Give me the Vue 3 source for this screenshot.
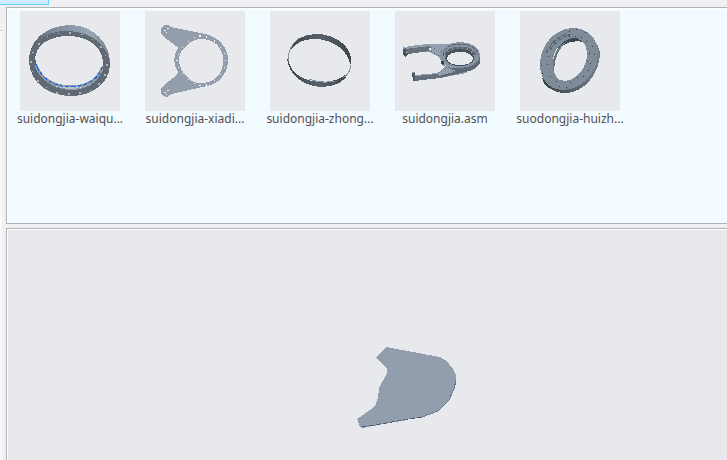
<template>
  <div class="window">
    <!-- Strip above the panels -->
    <div class="tab-strip">
      <button class="tab" aria-label="Current tab"></button>
    </div>

    <div class="body">
      <div class="gutter"></div>

      <main class="panels">
        <!-- Part thumbnails -->
        <section class="panel browser">
          <button v-for="part in parts" :key="part.id" class="part">
            <svg class="thumb" viewBox="0 0 100 100" shape-rendering="crispEdges" aria-hidden="true">
              <defs>
                <linearGradient id="rim" x1="0" x2="1">
                  <stop offset="0" stop-color="#505963" />
                  <stop offset="0.3" stop-color="#7f8b99" />
                  <stop offset="0.75" stop-color="#98a5b4" />
                  <stop offset="1" stop-color="#7b8794" />
                </linearGradient>
                <linearGradient id="band" x1="0" x2="1">
                  <stop offset="0" stop-color="#3d454c" />
                  <stop offset="0.5" stop-color="#59626a" />
                  <stop offset="1" stop-color="#3d454c" />
                </linearGradient>
                <linearGradient id="side" x1="0" x2="1">
                  <stop offset="0" stop-color="#353d44" />
                  <stop offset="1" stop-color="#737e8a" />
                </linearGradient>
              </defs>

              <!-- Outer ring -->
              <g v-if="part.shape === 'outer-ring'">
                <path fill="url(#rim)" fill-rule="evenodd" d="M9 51C8 29 27 14 51 14C74 15 90 32 90 52C89 72 73 85 51 85C29 85 11 73 9 51ZM15 49C16 65 30 78 51 78C70 77 83 67 83 50C81 34 67 24 48 24C28 24 15 34 15 49Z" />
                <path fill="#616a74" fill-rule="evenodd" d="M9 49C10 31 26 20 47 20C71 20 89 35 90 54C89 73 72 85 50 85C27 84 9 69 9 49ZM15 48C16 65 29 79 51 79C71 79 83 67 83 51C82 35 67 25 48 25C29 25 16 34 15 48Z" />
                <path fill="none" stroke="#8e9aa8" stroke-width="3" d="M16 54C21 68 34 76 51 76C66 76 78 69 82 57" />
                <path fill="none" stroke="#bac3cc" stroke-width="2" d="M42 76Q50 78 59 76" />
                <path fill="none" stroke="#1263e8" stroke-width="1" d="M15 49L17 56" />
                <path fill="none" stroke="#1263e8" stroke-width="1" stroke-dasharray="4 2" d="M17 56C22 67 34 76 51 76C67 75 79 68 82 56" />
                <path fill="#aeb9c6" d="M18 32h2v2h-2zM27 25h1v1h-1zM38 22h1v1h-1zM49 21h2v2h-2zM61 23h2v1h-2zM72 28h1v1h-1zM80 35h2v2h-2zM85 44h1v1h-1zM86 53h2v2h-2zM84 63h2v2h-2zM78 72h2v2h-2zM70 79h1v1h-1zM59 81h2v2h-2zM48 82h2v2h-2zM36 81h2v2h-2zM26 76h1v1h-1zM17 69h2v2h-2zM12 60h1v1h-1zM10 50h2v2h-2zM12 41h2v1h-2z" />
              </g>

              <!-- Flat plate with two arms -->
              <g v-else-if="part.shape === 'plate'">
                <path fill="#929eac" d="M19 14L23 14L26 16L55 22C72 24 83 35 83 49C83 65 71 75 57 76L27 83L22 86L18 85L16 82V77L20 73L32 64L33 61C28 54 28 44 33 37L31 35L19 26L16 22V17Z" />
                <path fill="#e8e9ed" d="M34 49C34 58 39 63 44 68C48 71 51 72 56 72C70 72 78 63 78 49C78 36 69 28 56 28C49 28 45 31 41 35C36 40 34 43 34 49Z" />
                <path fill="#f4f5f6" d="M22 17h2v1h-2zM19 19h2v1h-2zM21 21h1v1h-1zM22 79h2v1h-2zM19 81h2v1h-2zM21 83h1v1h-1zM43 30h1v1h-1zM49 26h1v1h-1zM54 24h2v2h-2zM61 25h1v2h-1zM69 29h1v2h-1zM75 36h1v1h-1zM79 42h1v1h-1zM80 49h1v1h-1zM79 56h1v1h-1zM75 63h1v1h-1zM69 69h1v1h-1zM61 73h1v2h-1zM54 74h2v1h-2zM49 72h1v1h-1zM43 68h1v1h-1zM37 62h1v1h-1zM33 56h1v1h-1zM31 49h2v1h-2zM33 43h1v1h-1zM37 36h1v1h-1z" />
              </g>

              <!-- Thin middle ring -->
              <g v-else-if="part.shape === 'thin-ring'">
                <path fill="url(#band)" d="M19 41C23 28 34 23 46 23C64 23 78 33 81 46V53H80C77 38 62 28 44 28C33 28 25 32 19 41Z" />
                <path fill="url(#band)" d="M17 48H18C20 62 34 71 52 71C64 71 74 67 80 59C76 71 65 76 51 76C33 75 19 64 17 48Z" />
                <path fill="none" stroke="#8694a1" stroke-width="1" d="M29 27C21 33 18 40 18 50M81 48C82 58 78 64 73 67M39 68Q51 73 65 70" />
              </g>

              <!-- Whole assembly -->
              <g v-else-if="part.shape === 'assembly'">
                <path fill="#939fae" d="M10 37L14 35L33 33L58 33L61 43L49 56L44 46L34 41L14 42Z" />
                <path fill="#66717c" d="M10 38L35 35V40L13 43Z" />
                <path fill="#4a535c" d="M8 37H11V42H13V44L10 46L8 43Z" />
                <path fill="#939fae" d="M20 64L43 62L51 54L74 56L72 62L45 67L19 69Z" />
                <path fill="#65707b" d="M20 65L43 63L45 67L20 70Z" />
                <path fill="#4b555f" d="M17 61H20V70H18V66H17Z" />
                <path fill="#8c98a5" d="M8 36h2v2h-2zM17 61h3v1h-3z" />
                <path fill="#5e6974" d="M46 46V53L50 55Q67 62 83 49L85 44V52C82 58 76 60 70 61L45 67L44 65L62 60Q52 58 46 51Z" />
                <path fill="#8793a1" d="M45 45C46 36 55 31 65 31C77 31 85 37 85 44C85 52 76 57 65 57C54 57 46 52 45 45Z" />
                <path fill="none" stroke="#56616c" stroke-width="1" stroke-dasharray="4 1" d="M48 45C48 37 56 33 66 33C75 33 82 38 83 44" />
                <path fill="none" stroke="#5b6671" stroke-width="3" stroke-dasharray="4 1" d="M51 44C53 38 59 37 66 37C73 37 79 40 80 45" />
                <path fill="#47525c" d="M50 47C51 41 57 38 65 38C74 38 79 42 79 47C79 52 73 55 65 55C57 55 51 52 50 47Z" />
                <path fill="#e8e9ed" d="M52 48C52 43 58 41 66 41C73 41 78 44 78 48C77 52 72 54 65 54C58 54 53 52 52 48Z" />
                <path fill="none" stroke="#515c67" stroke-width="1" stroke-dasharray="1 3" d="M35 36L48 41M36 40L46 46M43 62L53 56M47 65L63 59" />
                <path fill="#e8e9ed" d="M34 37h2v2h-2z" />
                <path fill="#35404a" d="M46 50h3v3h-3z" />
              </g>

              <!-- Slewing ring seen at an angle -->
              <g v-else>
                <path fill="url(#side)" d="M22 66C23 75 31 80 42 82C62 84 80 64 80 42L77 32C80 58 64 77 42 78C33 78 26 73 22 66Z" />
                <path fill="#7f8b98" fill-rule="evenodd" d="M20 53C20 33 36 17 53 17C68 17 78 28 78 42C78 62 62 79 42 79C28 78 20 68 20 53ZM33 50C32 61 36 70 45 70C57 69 68 55 67 42C67 35 63 29 56 28C44 27 33 38 33 50Z" />
                <path fill="#3e474f" d="M35 42C40 31 49 26 57 27L63 31C50 28 40 35 35 42Z" />
                <path fill="#687480" d="M33 60C31 44 38 34 47 30C39 38 34 46 34 60Z" />
                <path fill="none" stroke="#536069" stroke-width="1" stroke-dasharray="5 1" d="M26 42C31 31 40 24 50 23M30 39C35 31 42 26 50 24" />
                <path fill="#343d45" d="M49 20h1v1h-1zM56 18h1v1h-1zM65 21h1v1h-1zM49 25h1v1h-1zM55 25h1v1h-1zM61 26h1v1h-1zM66 30h1v1h-1zM72 35h1v1h-1zM69 42h1v1h-1zM74 43h1v1h-1zM67 50h1v1h-1zM70 52h1v1h-1zM68 59h1v1h-1zM63 65h1v1h-1zM57 66h1v1h-1zM50 71h1v1h-1zM46 76h1v1h-1zM39 75h1v1h-1zM36 70h1v1h-1zM30 65h1v1h-1zM22 62h1v1h-1zM27 53h1v1h-1zM21 54h1v1h-1zM28 45h1v1h-1zM26 40h1v1h-1z" />
              </g>
            </svg>
            <span class="name">{{ part.name }}</span>
          </button>
        </section>

        <!-- Model preview -->
        <section class="panel preview">
          <svg class="model" viewBox="0 0 100 82" shape-rendering="crispEdges" role="img" aria-label="Model preview">
            <path fill="#929eae" d="M29 0L83 10Q89 13 92 17L96 22L99 28V36L97 42L92 53L81 64L65 70L5 81L3 80L0 72L16 61Q21 57 22 41L30 26V22L19 11Z" />
            <path fill="none" stroke="#505b69" stroke-width="1" stroke-dasharray="5 2" d="M5 80L65 70" />
            <path fill="none" stroke="#6c7887" stroke-width="1" d="M65 70L81 64L92 53L97 42L99 33" />
          </svg>
        </section>
      </main>
    </div>
  </div>
</template>

<script setup>
const parts = [
  { id: 1, name: 'suidongjia-waiqu...', shape: 'outer-ring' },
  { id: 2, name: 'suidongjia-xiadi...', shape: 'plate' },
  { id: 3, name: 'suidongjia-zhong...', shape: 'thin-ring' },
  { id: 4, name: 'suidongjia.asm', shape: 'assembly' },
  { id: 5, name: 'suodongjia-huizh...', shape: 'slewing-ring' }
]
</script>

<style>
html,
body,
#app {
  height: 100%;
  margin: 0;
}
</style>

<style scoped>
.window {
  display: flex;
  flex-direction: column;
  height: 100%;
  overflow: hidden;
  background: #eff0f1;
  font-family: "Noto Sans", "Open Sans", sans-serif;
}

/* Tab strip */
.tab-strip {
  display: flex;
  height: 7px;
}

.tab {
  width: 49px;
  height: 5px;
  padding: 0;
  border: solid #66cfff;
  border-width: 0 1px 1px 0;
  background: #cceeff;
}

.body {
  display: flex;
  flex: 1;
  min-height: 0;
}

.gutter {
  width: 2px;
  margin: 23px 4px 0 0;
  border-top: 1px solid #c8c9ca;
  background: #fafafa;
}

/* Panels */
.panels {
  display: flex;
  flex: 1;
  flex-direction: column;
  gap: 4px;
  min-width: 0;
}

.panel {
  box-sizing: border-box;
  display: flex;
  border: 1px solid #b0b2b5;
  border-right: 0;
  box-shadow: inset 1px 1px #ffffff;
}

.browser {
  flex: 0 0 217px;
  align-items: flex-start;
  padding: 3px 0 0 3px;
  background: #f2fbff;
}

.part {
  display: flex;
  flex: 0 0 auto;
  flex-direction: column;
  align-items: center;
  width: 120px;
  margin-right: 5px;
  padding: 0;
  border: 0;
  background: none;
  color: #544f54;
  font-family: inherit;
}

.thumb {
  width: 100px;
  height: 100px;
  background: #e8e9ed;
}

.name {
  font-size: 12px;
  line-height: 15px;
  white-space: nowrap;
}

/* Preview */
.preview {
  flex: 1;
  align-items: flex-start;
  justify-content: center;
  padding: 118px 0 0 80px;
  border-bottom: 0;
  background: #e8e9ed;
}

.model {
  width: 100px;
  height: 82px;
}
</style>
